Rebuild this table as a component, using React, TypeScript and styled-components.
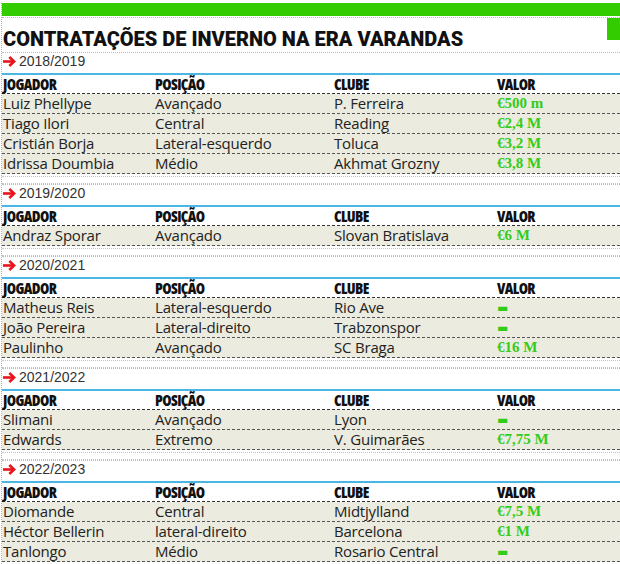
import React from 'react';
import styled, { createGlobalStyle } from 'styled-components';

const GREEN = '#33cc00';
const COND = '"Open Sans", "DejaVu Sans Condensed", "Liberation Sans", sans-serif';

const Global = createGlobalStyle`
  html, body { margin: 0; padding: 0; background: #fff; }
  body { width: 620px; height: 564px; overflow: hidden; }
`;

const Page = styled.div`
  width: 620px;
  height: 564px;
  overflow: hidden;
  box-sizing: border-box;
  padding: 3px 0 0 1px;
`;

const Frame = styled.div`
  border-left: 1px dotted #b0b0b0;
  min-height: 561px;
`;

const TopBar = styled.div`
  height: 13px;
  background: ${GREEN};
`;

const TitleRow = styled.div`
  height: 35px;
  margin-top: 1px;
  box-sizing: border-box;
  border-top: 1px dotted #bbb;
  display: flex;
  justify-content: space-between;
  align-items: flex-start;
`;

const Title = styled.h1`
  margin: 11px 0 0 1px;
  font-family: Roboto, "Liberation Sans", sans-serif;
  font-weight: 900;
  font-size: 20px;
  line-height: 20px;
  color: #111;
  letter-spacing: 0;
`;

const Tab = styled.div`
  width: 13px;
  height: 22px;
  background: ${GREEN};
`;

const Section = styled.section`
  display: flex;
  flex-direction: column;
`;

const Spacer = styled.div`
  box-sizing: border-box;
  border-top: 1px dotted #c4c4c4;
  border-bottom: 1px dotted #c4c4c4;
  margin-top: 2px;
  height: 8px;
`;

const YearRow = styled.div`
  height: 21px;
  box-sizing: border-box;
  border-top: 1px dotted #bbb;
  display: flex;
  align-items: flex-start;
  gap: 3px;
  padding-left: 1px;
`;

const Year = styled.span`
  font-family: "Liberation Sans", sans-serif;
  font-size: 14px;
  line-height: 16px;
  color: #333;
`;

const Arrow = styled.svg`
  margin-top: 3px;
  flex: none;
`;

const BlueLine = styled.div`
  height: 2px;
  background: #4ab6e4;
`;

const Grid = styled.div<{ $data?: boolean }>`
  display: grid;
  grid-template-columns: 152px 179px 163px 1fr;
  align-items: center;
  box-sizing: border-box;
  padding-left: 1px;
  height: ${(p) => (p.$data ? 20 : 19)}px;
  background: ${(p) => (p.$data ? '#ebebdf' : '#fff')};
  border-bottom: 1px dashed ${(p) => (p.$data ? '#555' : '#333')};
`;

const HeadCell = styled.span`
  font-family: ${COND};
  font-stretch: 75%;
  font-weight: 800;
  font-size: 15px;
  line-height: 16px;
  color: #111;
  letter-spacing: -0.6px;
`;

const Cell = styled.span`
  font-family: ${COND};
  font-stretch: 89%;
  font-weight: 500;
  font-size: 15px;
  line-height: 17px;
  color: #222;
  letter-spacing: -0.2px;
  white-space: nowrap;
`;

const Value = styled.span`
  font-family: "Liberation Serif", serif;
  font-weight: 700;
  font-size: 15px;
  line-height: 17px;
  color: #33cc1a;
  white-space: nowrap;
`;

const Dash = styled.span`
  font-family: "DejaVu Sans", sans-serif;
  font-size: 12px;
  line-height: 17px;
  color: #33cc1a;
  padding-top: 2px;
`;

type Row = [string, string, string, string];

const seasons: { year: string; rows: Row[] }[] = [
  {
    year: '2018/2019',
    rows: [
      ['Luiz Phellype', 'Avançado', 'P. Ferreira', '€500 m'],
      ['Tiago Ilori', 'Central', 'Reading', '€2,4 M'],
      ['Cristián Borja', 'Lateral-esquerdo', 'Toluca', '€3,2 M'],
      ['Idrissa Doumbia', 'Médio', 'Akhmat Grozny', '€3,8 M'],
    ],
  },
  {
    year: '2019/2020',
    rows: [['Andraz Sporar', 'Avançado', 'Slovan Bratislava', '€6 M']],
  },
  {
    year: '2020/2021',
    rows: [
      ['Matheus Reis', 'Lateral-esquerdo', 'Rio Ave', '—'],
      ['João Pereira', 'Lateral-direito', 'Trabzonspor', '—'],
      ['Paulinho', 'Avançado', 'SC Braga', '€16 M'],
    ],
  },
  {
    year: '2021/2022',
    rows: [
      ['Slimani', 'Avançado', 'Lyon', '—'],
      ['Edwards', 'Extremo', 'V. Guimarães', '€7,75 M'],
    ],
  },
  {
    year: '2022/2023',
    rows: [
      ['Diomande', 'Central', 'Midtjylland', '€7,5 M'],
      ['Héctor Bellerin', 'lateral-direito', 'Barcelona', '€1 M'],
      ['Tanlongo', 'Médio', 'Rosario Central', '—'],
    ],
  },
];

const RedArrow = () => (
  <Arrow width="13" height="11" viewBox="0 0 13 11">
    <path d="M0 5.5 H10" stroke="#e8141c" strokeWidth="2.6" />
    <path d="M6.3 1 L11.2 5.5 L6.3 10" stroke="#e8141c" strokeWidth="2.6" fill="none" />
  </Arrow>
);

export default function App() {
  return (
    <Page>
      <Global />
      <Frame>
        <TopBar />
        <TitleRow>
          <Title>CONTRATAÇÕES DE INVERNO NA ERA VARANDAS</Title>
          <Tab />
        </TitleRow>
        {seasons.map((s, i) => (
          <Section key={s.year}>
            {i > 0 && <Spacer />}
            <YearRow>
              <RedArrow />
              <Year>{s.year}</Year>
            </YearRow>
            <BlueLine />
            <Grid>
              <HeadCell>JOGADOR</HeadCell>
              <HeadCell>POSIÇÃO</HeadCell>
              <HeadCell>CLUBE</HeadCell>
              <HeadCell>VALOR</HeadCell>
            </Grid>
            {s.rows.map((r) => (
              <Grid $data key={r[0]}>
                <Cell>{r[0]}</Cell>
                <Cell>{r[1]}</Cell>
                <Cell>{r[2]}</Cell>
                {r[3] === '—' ? <Dash>▬</Dash> : <Value>{r[3]}</Value>}
              </Grid>
            ))}
          </Section>
        ))}
      </Frame>
    </Page>
  );
}
